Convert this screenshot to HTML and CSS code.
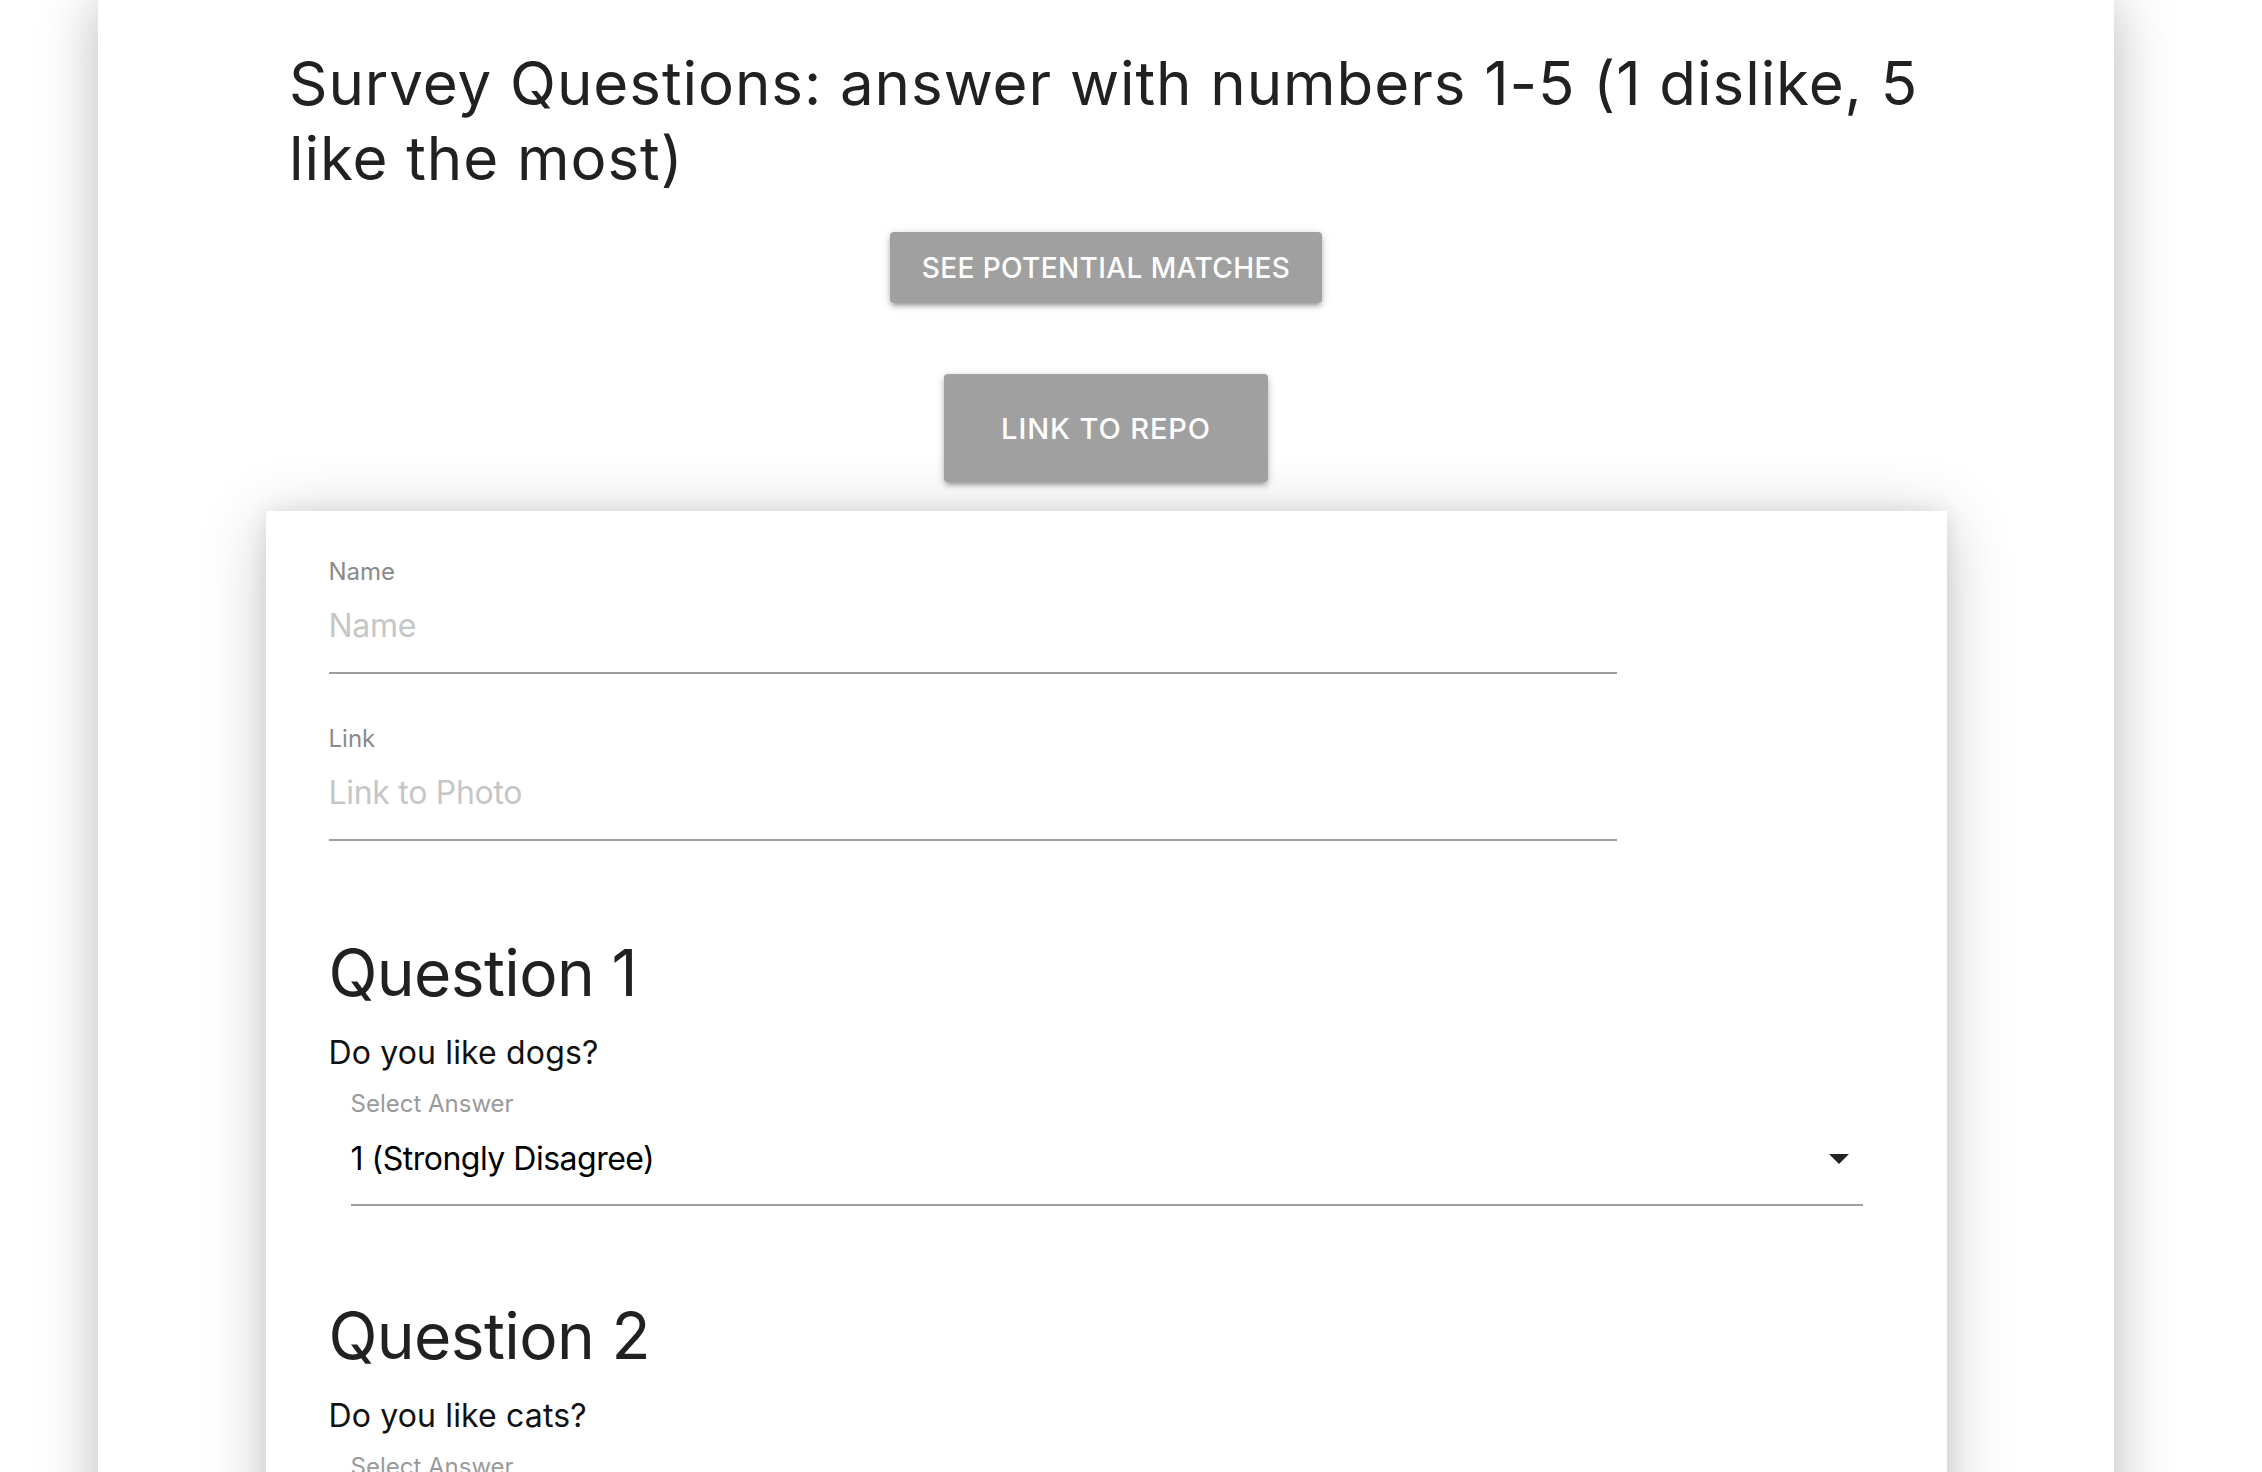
FILE: index.html
```html
<!DOCTYPE html>
<html lang="en">
<head>
<meta charset="utf-8">
<title>Survey</title>
<link rel="stylesheet" href="styles.css">
</head>
<body>
<div class="page">
  <h1 class="title">Survey Questions: answer with numbers 1-5 (1 dislike, 5 like the most)</h1>
  <div class="actions">
    <button class="btn btn-small">See Potential Matches</button>
    <button class="btn btn-large">Link to Repo</button>
  </div>
  <form class="card">
    <div class="field">
      <label class="field-label">Name</label>
      <div class="field-input placeholder">Name</div>
    </div>
    <div class="field">
      <label class="field-label">Link</label>
      <div class="field-input placeholder">Link to Photo</div>
    </div>

    <section class="question">
      <h2 class="q-title">Question 1</h2>
      <p class="q-text">Do you like dogs?</p>
      <div class="select">
        <label class="select-label">Select Answer</label>
        <div class="select-value">
          <span>1 (Strongly Disagree)</span>
          <svg class="arrow" width="20" height="10" viewBox="0 0 20 10"><path d="M0 0h20L10 10z" fill="#222"/></svg>
        </div>
      </div>
    </section>

    <section class="question">
      <h2 class="q-title">Question 2</h2>
      <p class="q-text">Do you like cats?</p>
      <div class="select">
        <label class="select-label">Select Answer</label>
        <div class="select-value">
          <span>1 (Strongly Disagree)</span>
          <svg class="arrow" width="20" height="10" viewBox="0 0 20 10"><path d="M0 0h20L10 10z" fill="#222"/></svg>
        </div>
      </div>
    </section>
  </form>
</div>
</body>
</html>
```
FILE: styles.css
```css
html, body {
  margin: 0;
  padding: 0;
  background: #ffffff;
  overflow: hidden;
}
body {
  font-family: Inter, Roboto, "Liberation Sans", sans-serif;
  color: #212121;
}
.page {
  width: 2016px;
  margin-left: 98px;
  min-height: 2200px;
  background: #fff;
  box-shadow: 0 0 55px rgba(0, 0, 0, 0.28);
  padding: 46px 0 0;
  box-sizing: border-box;
}
.title {
  margin: 0 191px;
  font-size: 60px;
  line-height: 75px;
  font-weight: 400;
  color: #212121;
  letter-spacing: 0.95px;
}
.actions {
  display: flex;
  flex-direction: column;
  align-items: center;
  margin-top: 36px;
}
.btn {
  border: none;
  background: #a0a0a0;
  color: #fff;
  font-family: Inter, Roboto, "Liberation Sans", sans-serif;
  font-weight: 500;
  text-transform: uppercase;
  border-radius: 4px;
  box-shadow: 0 2px 10px rgba(0,0,0,0.2), 0 4px 4px rgba(0,0,0,0.14), 0 6px 2px -4px rgba(0,0,0,0.12);
  padding: 0;
  cursor: pointer;
}
.btn-small {
  width: 432px;
  height: 71px;
  font-size: 28px;
  letter-spacing: 0.4px;
}
.btn-large {
  width: 324px;
  height: 108px;
  font-size: 29px;
  letter-spacing: 0.9px;
  margin-top: 71px;
}
.card {
  display: block;
  width: 1681px;
  box-sizing: border-box;
  margin: 29px auto 0;
  background: #fff;
  padding: 49px 84px 0 63px;
  box-shadow: 0 10px 60px rgba(0,0,0,0.22), 0 0 20px rgba(0,0,0,0.08);
  min-height: 1400px;
}
.field {
  width: 1288px;
  margin-bottom: 53px;
}
.field-label {
  display: block;
  font-size: 24px;
  line-height: 24px;
  color: #8a8a8a;
}
.field-input {
  font-size: 32px;
  line-height: 40px;
  letter-spacing: -0.3px;
  padding: 22px 0 26px;
  border-bottom: 2px solid #9e9e9e;
}
.placeholder {
  color: #c6c6c6;
}
.field + .question {
  margin-top: 94px;
}
.question + .question {
  margin-top: 92px;
}
.q-title {
  margin: 0;
  font-size: 64px;
  line-height: 76px;
  font-weight: 400;
  color: #212121;
  letter-spacing: -0.6px;
}
.q-text {
  margin: 22px 0 0;
  font-size: 32px;
  line-height: 40px;
  letter-spacing: 0.15px;
  color: #111;
}
.select {
  margin: 19px 0 0 22px;
}
.select-label {
  display: block;
  font-size: 24px;
  line-height: 24px;
  color: #9a9a9a;
}
.select-value {
  display: flex;
  align-items: center;
  justify-content: space-between;
  margin-top: 23px;
  font-size: 32px;
  line-height: 40px;
  letter-spacing: -0.5px;
  color: #000;
  padding-bottom: 25px;
  border-bottom: 2px solid #9e9e9e;
}
.arrow {
  margin-right: 14px;
}
```
